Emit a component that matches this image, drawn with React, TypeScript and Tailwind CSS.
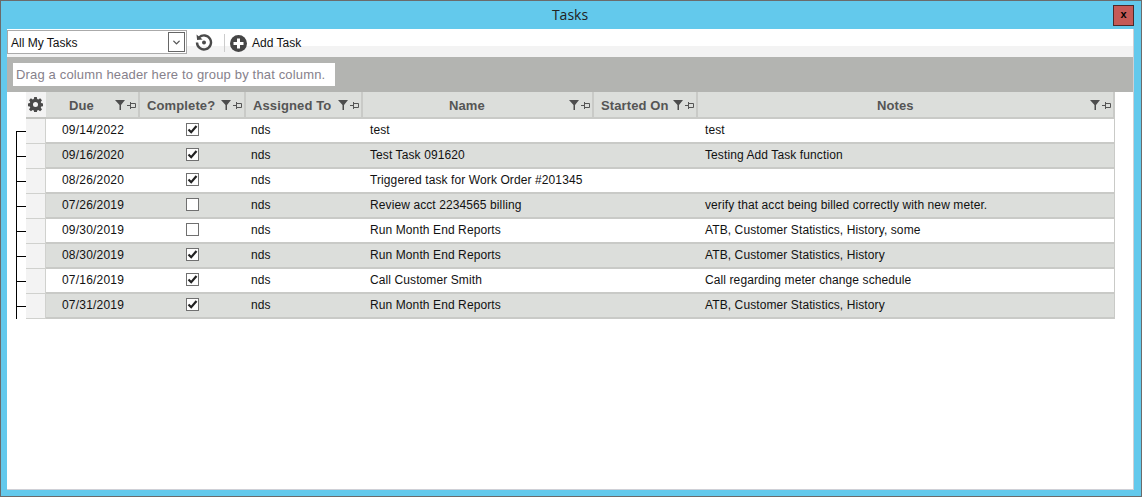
import { ChevronDown } from "lucide-react";

const columns = [
  { label: "Due", width: "w-[94px]", labelClass: "pl-[23px]" },
  { label: "Complete?", width: "w-[106px]", labelClass: "pl-[7px]" },
  { label: "Assigned To", width: "w-[117px]", labelClass: "pl-[7px]" },
  { label: "Name", width: "w-[231px]", labelClass: "pl-[86px]" },
  { label: "Started On", width: "w-[104px]", labelClass: "pl-[7px]" },
  { label: "Notes", width: "w-[417px]", labelClass: "pl-[179px]" },
];

const tasks = [
  { due: "09/14/2022", done: true, name: "test", notes: "test" },
  { due: "09/16/2020", done: true, name: "Test Task 091620", notes: "Testing Add Task function" },
  { due: "08/26/2020", done: true, name: "Triggered task for Work Order #201345", notes: "" },
  { due: "07/26/2019", done: false, name: "Review acct 2234565 billing", notes: "verify that acct being billed correctly with new meter." },
  { due: "09/30/2019", done: false, name: "Run Month End Reports", notes: "ATB, Customer Statistics, History, some" },
  { due: "08/30/2019", done: true, name: "Run Month End Reports", notes: "ATB, Customer Statistics, History" },
  { due: "07/16/2019", done: true, name: "Call Customer Smith", notes: "Call regarding meter change schedule" },
  { due: "07/31/2019", done: true, name: "Run Month End Reports", notes: "ATB, Customer Statistics, History" },
];

function GearIcon() {
  return (
    <svg width="15" height="15" viewBox="0 0 16 16" fill="#4a4a4a">
      <path
        fillRule="evenodd"
        d="M6.6 0h2.8l.4 2.2 1.2.5L12.900 1.400l2 2-1.300 1.900.5 1.200 2.200.4v2.800l-2.200.4-.5 1.200 1.300 1.900-2 2-1.900-1.300-1.200.5-.4 2.200H6.600l-.4-2.200-1.200-.5-1.900 1.300-2-2 1.300-1.900-.5-1.200L-.3 9.700V6.900l2.200-.4.5-1.200L1.100 3.400l2-2L5 2.700l1.200-.5zM8 5.300a2.700 2.700 0 1 0 0 5.400 2.700 2.700 0 0 0 0-5.400z"
      />
    </svg>
  );
}

function FilterPin() {
  return (
    <div className="flex items-center gap-[2px] pt-px">
      <svg width="10" height="10" viewBox="0 0 10 10" fill="#4d4d4d">
        <path d="M0 0h10L6 5v5H4.500V5z" />
      </svg>
      <svg width="9" height="7" viewBox="0 0 9 7" fill="none" stroke="#555" strokeWidth="1">
        <path d="M0 3.500h3M3.500 0v7M3.500 1.500h5v4h-5" />
      </svg>
    </div>
  );
}

function RefreshIcon() {
  return (
    <svg width="18" height="18" viewBox="0 0 18 18" fill="none">
      <path d="M4 4.500A7 7 0 1 1 2 9.500" stroke="#4a4a4a" strokeWidth="2.400" />
      <path d="M1.500 1.500l.6 5.500 5.500-.6z" fill="#4a4a4a" />
      <circle cx="9" cy="9.500" r="2" fill="#4a4a4a" />
    </svg>
  );
}

function AddIcon() {
  return (
    <svg width="17" height="17" viewBox="0 0 17 17">
      <circle cx="8.500" cy="8.500" r="8.500" fill="#454545" />
      <path d="M7 3.500h3V7h3.500v3H10v3.500H7V10H3.500V7H7z" fill="#fff" />
    </svg>
  );
}

function Checkbox({ checked }: { checked: boolean }) {
  return (
    <div className="flex h-[13px] w-[13px] items-center justify-center border border-[#707070] bg-white">
      {checked && (
        <svg width="11" height="11" viewBox="0 0 11 11" fill="none" stroke="#222" strokeWidth="2.200">
          <path d="M1.500 5.500l2.700 2.700L9.500 2" />
        </svg>
      )}
    </div>
  );
}

export default function App() {
  return (
    <div className="flex h-[497px] w-[1142px] flex-col overflow-hidden border border-[#6b6b6b] bg-[#63c9ec] [font-family:Liberation_Sans,sans-serif]">
      {/* Title bar */}
      <div className="flex h-[28px] shrink-0 items-center pr-[7px]">
        <div className="flex-1 pb-[2px] pl-[26px] text-center text-[14px] text-[#222] [font-family:Open_Sans,sans-serif]">Tasks</div>
        <div className="flex h-[21px] w-[21px] items-center justify-center border border-[#4b2a2a] bg-[#c55a56] pb-[2px] text-[11px] font-bold leading-none text-black">
          x
        </div>
      </div>

      <div className="ml-[6px] mr-[7px] mb-[6px] flex flex-1 flex-col border-b border-r border-[#cfd0d6] bg-white">
        {/* Toolbar */}
        <div className="flex h-[28px] shrink-0 items-start bg-[linear-gradient(#ffffff_0,#ffffff_17px,#f3f3f3_17px)] pt-px">
          <div className="flex h-[24px] w-[180px] items-center justify-between border border-[#aaaaaa] bg-white pl-[3px] pr-[1px] text-[12px] text-[#111]">
            <span className="pt-[2px]">All My Tasks</span>
            <div className="flex h-[20px] w-[17px] items-center justify-center border border-[#666] bg-white">
              <ChevronDown size={11} strokeWidth={3} color="#555" />
            </div>
          </div>
          <div className="ml-[8px] mt-[3px]">
            <RefreshIcon />
          </div>
          <div className="ml-[11px] mt-[4px] h-[18px] w-px bg-[#cccccc]" />
          <div className="ml-[5px] mt-[4px] flex items-center gap-[5px] text-[12px] text-[#111]">
            <AddIcon />
            Add Task
          </div>
        </div>

        {/* Group panel */}
        <div className="flex h-[35px] shrink-0 items-center bg-[#b3b4b1] pl-[6px]">
          <div className="flex h-[23px] w-[322px] items-center whitespace-nowrap bg-white pl-[3px] text-[13px] tracking-[0.16px] text-[#86818b]">
            Drag a column header here to group by that column.
          </div>
        </div>

        {/* Grid */}
        <div className="flex flex-col">
          <div className="flex h-[27px]">
            <div className="w-[19px]" />
            <div className="flex w-[20px] items-center justify-center border-b-2 border-[#c4c5c2] bg-[#f3f3f3] pr-px">
              <GearIcon />
            </div>
            {columns.map((col) => (
              <div
                key={col.label}
                className={`${col.width} flex items-center justify-between border-b-2 border-r-2 border-[#c9cac7] bg-[#dcdedb] pr-[2px] text-[13px] font-bold tracking-[0.12px] text-[#555555] ${col.labelClass}`}
              >
                <span className="whitespace-nowrap pt-[2px]">{col.label}</span>
                <FilterPin />
              </div>
            ))}
          </div>

          {tasks.map((task, i) => (
            <div key={i} className="flex h-[25px]">
              {/* Tree connector */}
              <div className="flex w-[19px] pl-[9px]">
                <div className={`w-px bg-black ${i === 0 ? "mt-[12px]" : ""}`} />
                <div className="mt-[12px] h-px w-[9px] bg-black" />
              </div>
              <div className="w-[20px] border-b border-r border-[#d0d1ce] bg-[#f3f3f3]" />
              <div
                className={`flex w-[1069px] items-center border-b-2 border-r border-[#c9cac7] text-[12px] tracking-[0.1px] text-[#111] ${
                  i % 2 === 1 ? "bg-[#dcdedb]" : "bg-white"
                }`}
              >
                <div className="w-[94px] pb-[2px] pl-[16px] tracking-[0.2px]">{task.due}</div>
                <div className="flex w-[106px] justify-center pb-[2px] pr-[2px]">
                  <Checkbox checked={task.done} />
                </div>
                <div className="w-[117px] pb-[2px] pl-[5px]">nds</div>
                <div className="w-[335px] pb-[2px] pl-[7px]">{task.name}</div>
                <div className="pb-[2px] pl-[7px]">{task.notes}</div>
              </div>
            </div>
          ))}
        </div>
      </div>
    </div>
  );
}
